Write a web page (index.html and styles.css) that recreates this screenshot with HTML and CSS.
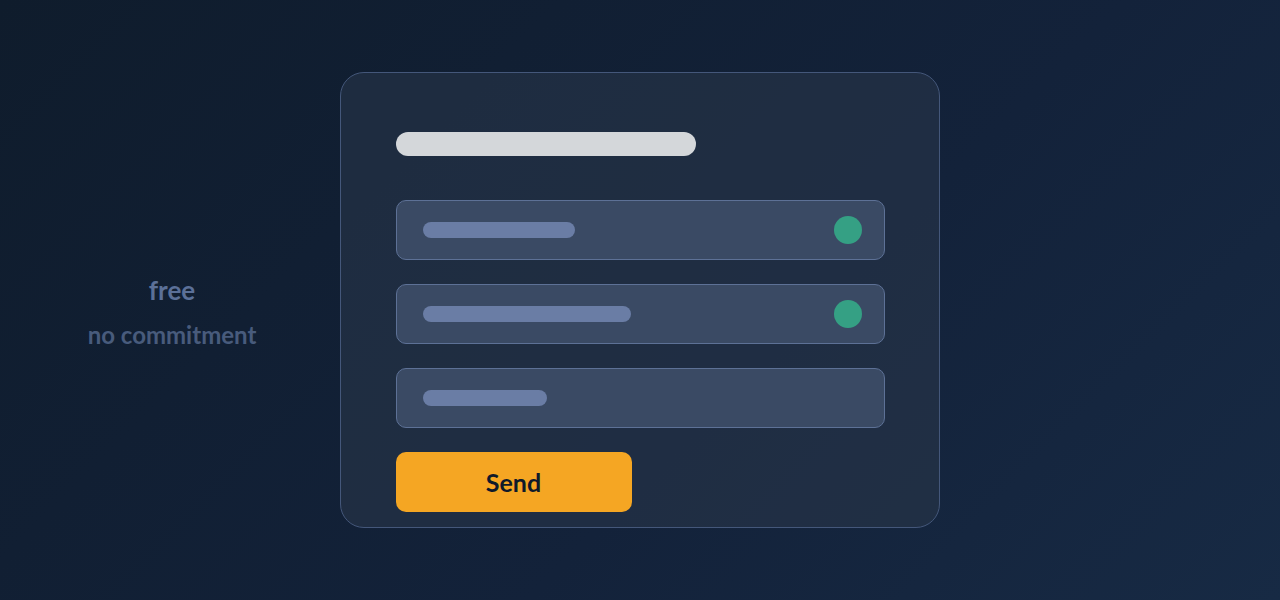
FILE: index.html
```html
<!DOCTYPE html>
<html lang="en">
<head>
<meta charset="utf-8">
<title>Form</title>
<link rel="stylesheet" href="styles.css">
</head>
<body>
<div class="page">
  <aside class="side">
    <div class="side-main">free</div>
    <div class="side-sub">no commitment</div>
  </aside>
  <section class="card">
    <div class="title-bar"></div>
    <div class="fields">
      <div class="field"><span class="ph" style="width:152px"></span><span class="dot"></span></div>
      <div class="field"><span class="ph" style="width:208px"></span><span class="dot"></span></div>
      <div class="field"><span class="ph" style="width:124px"></span></div>
    </div>
    <button class="send">Send</button>
  </section>
</div>
</body>
</html>
```
FILE: styles.css
```css
* { box-sizing: border-box; }
html, body { margin: 0; padding: 0; }
body {
  width: 1280px;
  height: 600px;
  overflow: hidden;
  background: linear-gradient(135deg, #0f1c2c 0%, #13223a 60%, #172a44 100%);
  font-family: Lato, "Open Sans", sans-serif;
}
.page {
  display: flex;
  align-items: flex-start;
  height: 600px;
}
.side {
  width: 340px;
  height: 100%;
  display: flex;
  flex-direction: column;
  align-items: center;
  justify-content: center;
  padding-left: 4px;
  font-weight: 700;
}
.side-main {
  color: #5b7098;
  font-size: 26px;
  line-height: 30px;
  margin-top: 25px;
}
.side-sub {
  color: #485b7c;
  font-size: 24px;
  line-height: 30px;
  margin-top: 15px;
}
.card {
  margin-top: 72px;
  width: 600px;
  height: 456px;
  border: 1.5px solid #44577a;
  border-radius: 24px;
  background: rgba(38, 52, 72, 0.65);
  padding: 58.5px 54.5px 14.5px;
  display: flex;
  flex-direction: column;
}
.title-bar {
  width: 300px;
  height: 24px;
  flex: none;
  border-radius: 12px;
  background: #d4d7da;
}
.fields {
  margin-top: 44px;
  display: flex;
  flex-direction: column;
  gap: 24px;
}
.field {
  width: 489px;
  height: 60px;
  border: 1.5px solid #5d7196;
  border-radius: 10px;
  background: #3a4a64;
  display: flex;
  align-items: center;
  justify-content: space-between;
  padding: 0 21.5px 0 26.5px;
}
.ph {
  height: 16px;
  border-radius: 8px;
  background: #6a7da5;
}
.dot {
  width: 28px;
  height: 28px;
  border-radius: 50%;
  background: #35a084;
}
.send {
  margin-top: 24px;
  width: 236px;
  height: 60px;
  flex: none;
  border: none;
  border-radius: 10px;
  background: #f5a623;
  color: #0f1a2a;
  font-family: Lato, "Open Sans", sans-serif;
  font-weight: 700;
  font-size: 25px;
  cursor: pointer;
}
```
